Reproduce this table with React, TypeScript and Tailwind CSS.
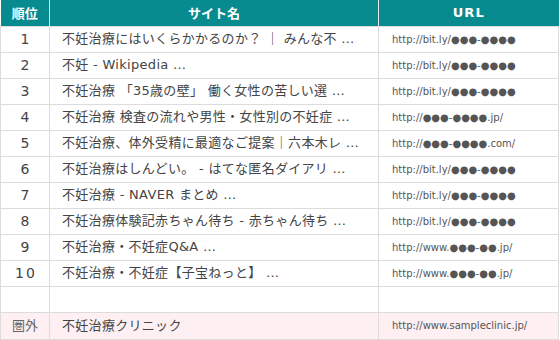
import React from 'react'

// 検索順位の一覧
const rows = [
    { rank: '1', title: '不妊治療にはいくらかかるのか？ ｜ みんな不 …', url: 'http://bit.ly/●●●-●●●●' },
    { rank: '2', title: '不妊 - Wikipedia …', url: 'http://bit.ly/●●●-●●●●' },
    { rank: '3', title: '不妊治療 「35歳の壁」 働く女性の苦しい選 …', url: 'http://bit.ly/●●●-●●●●' },
    { rank: '4', title: '不妊治療 検査の流れや男性・女性別の不妊症 …', url: 'http://●●●-●●●●.jp/' },
    { rank: '5', title: '不妊治療、体外受精に最適なご提案｜六本木レ …', url: 'http://●●●-●●●●.com/' },
    { rank: '6', title: '不妊治療はしんどい。 - はてな匿名ダイアリ …', url: 'http://bit.ly/●●●-●●●●' },
    { rank: '7', title: '不妊治療 - NAVER まとめ …', url: 'http://bit.ly/●●●-●●●●' },
    { rank: '8', title: '不妊治療体験記赤ちゃん待ち - 赤ちゃん待ち …', url: 'http://bit.ly/●●●-●●●●' },
    { rank: '9', title: '不妊治療・不妊症Q&A …', url: 'http://www.●●●-●●.jp/' },
    { rank: '10', title: '不妊治療・不妊症【子宝ねっと】 …', url: 'http://www.●●●-●●.jp/' },
]

const jp = "font-['DejaVu_Sans','Noto_Sans_CJK_JP',sans-serif]"
const cell = 'border border-[#dcdcdc] h-[26px] p-0'
const titleCell = `${cell} pl-[12px] whitespace-nowrap overflow-hidden tracking-[0.3px]`
const urlCell = `${cell} pl-[13px] text-[10px] text-[#555] whitespace-nowrap`

export default function App() {
    return (
        <div className={`w-[560px] h-[340px] bg-white overflow-hidden ${jp}`}>
            <table className="w-[559px] border-collapse table-fixed">
                <colgroup>
                    <col className="w-[49px]" />
                    <col className="w-[329px]" />
                    <col />
                </colgroup>
                <thead>
                    <tr className="bg-[#088b8f] text-white text-[13px] font-bold h-[26px]">
                        <th className="border-r border-r-[#e8e8e8] border-b border-b-[#dcdcdc] p-0 font-['Noto_Sans_CJK_JP',sans-serif]">順位</th>
                        <th className="border-r border-r-[#e8e8e8] border-b border-b-[#dcdcdc] p-0 font-['Noto_Sans_CJK_JP',sans-serif]">サイト名</th>
                        <th className="border-b border-b-[#dcdcdc] p-0 tracking-[1px]">URL</th>
                    </tr>
                </thead>
                <tbody className="text-[#444] text-[13px]">
                    {rows.map(r => (
                        <tr key={r.rank}>
                            <td className={`${cell} text-center tracking-[2px] pl-[2px] text-[14px]`}>{r.rank}</td>
                            <td className={titleCell}>{r.title}</td>
                            <td className={urlCell}>{r.url}</td>
                        </tr>
                    ))}
                    <tr>
                        <td className={cell}></td>
                        <td className={cell}></td>
                        <td className={cell}></td>
                    </tr>
                    <tr className="bg-[#fdeff2]">
                        <td className={`${cell} h-[27px] text-center text-[#666]`}>圏外</td>
                        <td className={`${titleCell} h-[27px]`}>不妊治療クリニック</td>
                        <td className={`${urlCell} h-[27px]`}>http://www.sampleclinic.jp/</td>
                    </tr>
                </tbody>
            </table>
        </div>
    )
}
